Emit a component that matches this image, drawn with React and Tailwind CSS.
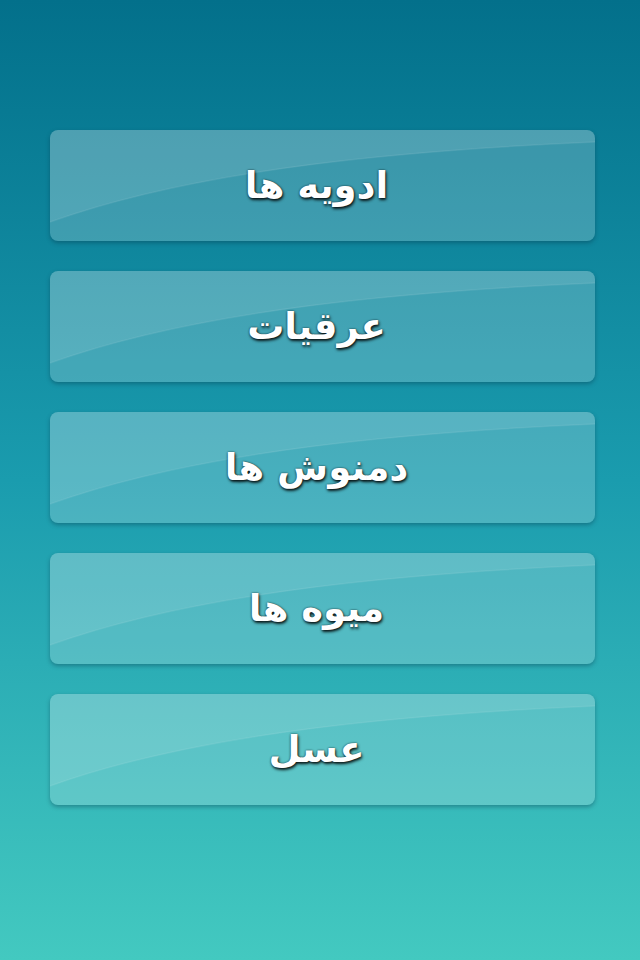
import React from 'react';

const items = ['ادویه ها', 'عرقیات', 'دمنوش ها', 'میوه ها', 'عسل'];

const MenuButton = ({ label }) => (
  <button
    type="button"
    className="relative h-[111px] w-[545px] overflow-hidden rounded-[8px] bg-white/20 shadow-[0_2px_4px_rgba(0,40,60,0.35)]"
  >
    {/* gloss */}
    <svg
      className="absolute inset-0 h-full w-full"
      viewBox="0 0 545 111"
      preserveAspectRatio="none"
    >
      <path d="M0 0 H545 V12 C360 20 150 38 0 92 Z" fill="rgba(255,255,255,0.1)" />
      <path d="M0 92 C150 38 360 20 545 12" fill="none" stroke="rgba(255,255,255,0.08)" strokeWidth="1.5" />
    </svg>
    <span
      dir="rtl"
      className="relative mr-[12px] font-['DejaVu_Sans',sans-serif] text-[37px] font-bold text-white [text-shadow:1px_2px_3px_rgba(0,0,0,0.85),0_0_2px_rgba(0,0,0,0.7)]"
    >
      {label}
    </span>
  </button>
);

const App = () => {
  return (
    <div className="flex h-[960px] w-[640px] flex-col gap-[30px] bg-gradient-to-b from-[#03708b] via-[#1a9cae] to-[#43c9c0] pl-[50px] pt-[130px]">
      {items.map((item) => (
        <MenuButton key={item} label={item} />
      ))}
    </div>
  );
};

export default App;
